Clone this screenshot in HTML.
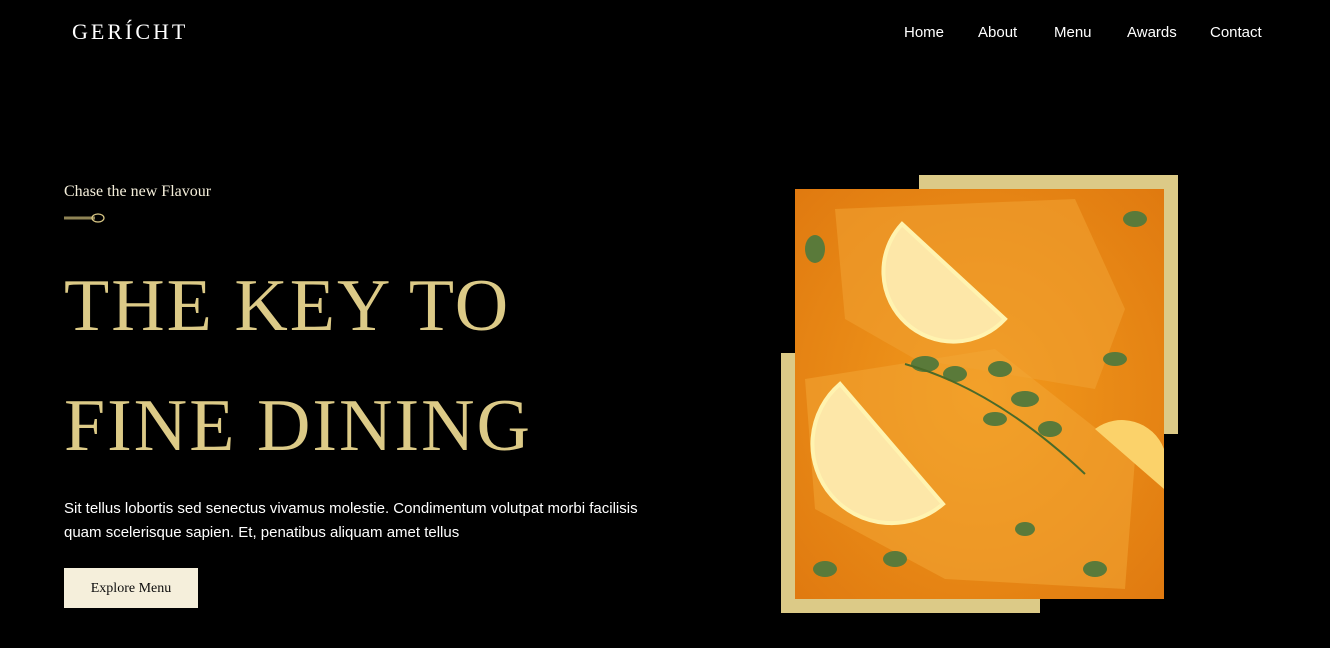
<!DOCTYPE html>
<html><head><style>
body{margin:0;background:#000;width:1330px;height:648px;overflow:hidden;position:relative;font-family:"Liberation Sans",sans-serif;color:#fff}
.logo{position:absolute;left:72px;top:19px;font-family:"Liberation Serif",serif;font-size:22px;letter-spacing:3px;color:#fff}
nav{position:absolute;top:24px;font-size:15px}
nav span{position:absolute;white-space:nowrap}
.sub{position:absolute;left:64px;top:183px;font-family:"Liberation Serif",serif;font-size:16px;color:#F5EFDB}
h1{position:absolute;left:64px;top:246px;margin:0;font-family:"Liberation Serif",serif;font-weight:normal;font-size:74px;line-height:120px;color:#DCCA87;letter-spacing:2px}
p{position:absolute;left:64px;top:497px;margin:0;font-size:15px;line-height:24px;width:608px;color:#fff}
.btn{position:absolute;left:64px;top:568px;width:134px;height:40px;background:#F5EFDB;color:#0C0C0C;font-family:"Liberation Serif",serif;font-size:14px;text-align:center;line-height:42px}
.g{position:absolute;background:#DCCA87}
</style></head><body>
<div class="logo">GERÍCHT</div>
<nav><span style="left:904px">Home</span><span style="left:978px">About</span><span style="left:1054px">Menu</span><span style="left:1127px">Awards</span><span style="left:1210px">Contact</span></nav>
<div class="sub">Chase the new Flavour</div>
<svg style="position:absolute;left:64px;top:212px" width="42" height="12"><line x1="0" y1="6" x2="31" y2="6" stroke="#8f8455" stroke-width="3"/><ellipse cx="34" cy="6" rx="6" ry="4" fill="none" stroke="#DCCA87" stroke-width="1.2"/></svg>
<h1>THE KEY TO<br>FINE DINING</h1>
<p>Sit tellus lobortis sed senectus vivamus molestie. Condimentum volutpat morbi facilisis quam scelerisque sapien. Et, penatibus aliquam amet tellus</p>
<div class="btn">Explore Menu</div>
<div class="g" style="left:919px;top:175px;width:259px;height:259px"></div>
<div class="g" style="left:781px;top:353px;width:259px;height:260px"></div>
<svg style="position:absolute;left:795px;top:189px" width="369" height="410" viewBox="0 0 369 410">
<defs><radialGradient id="o" cx="50%" cy="50%" r="70%"><stop offset="0" stop-color="#f29a1c"/><stop offset="1" stop-color="#e07a10"/></radialGradient></defs>
<rect width="369" height="410" fill="url(#o)"/>
<path d="M40 20 L280 10 L330 120 L300 200 L120 170 L50 130Z" fill="#f0a030" opacity=".6"/>
<path d="M10 190 L200 160 L340 270 L330 400 L150 390 L20 320Z" fill="#f3a535" opacity=".55"/>
<path d="M107 35 A60 60 0 0 0 210 130 Z" fill="#fde7a8" stroke="#fff3b0" stroke-width="4"/>
<path d="M45 195 A65 65 0 0 0 148 315 Z" fill="#fde7a8" stroke="#fff3b0" stroke-width="4"/>
<path d="M300 240 A45 45 0 0 1 369 260 L369 300Z" fill="#fbd26a"/>
<g fill="#5a7a3a"><ellipse cx="130" cy="175" rx="14" ry="8"/><ellipse cx="160" cy="185" rx="12" ry="8"/><ellipse cx="205" cy="180" rx="12" ry="8"/><ellipse cx="230" cy="210" rx="14" ry="8"/><ellipse cx="255" cy="240" rx="12" ry="8"/><ellipse cx="200" cy="230" rx="12" ry="7"/><ellipse cx="320" cy="170" rx="12" ry="7"/><ellipse cx="20" cy="60" rx="10" ry="14"/><ellipse cx="30" cy="380" rx="12" ry="8"/><ellipse cx="100" cy="370" rx="12" ry="8"/><ellipse cx="340" cy="30" rx="12" ry="8"/><ellipse cx="300" cy="380" rx="12" ry="8"/><ellipse cx="230" cy="340" rx="10" ry="7"/></g>
<path d="M110 175 Q200 200 290 285" stroke="#4a6a2a" stroke-width="2" fill="none"/>
</svg>
</body></html>
